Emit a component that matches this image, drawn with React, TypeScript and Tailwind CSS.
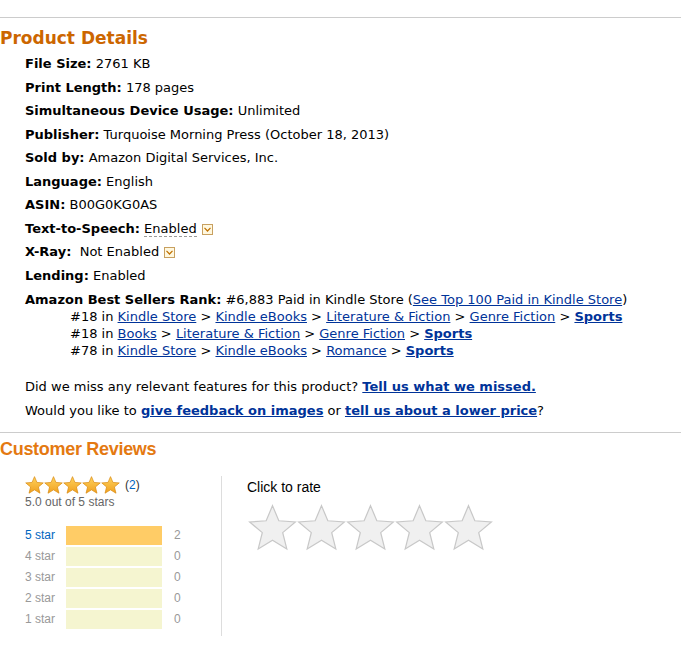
import React from 'react';

const link = 'text-[#003399] underline';

function Drop() {
  return (
    <span className="inline-flex items-center justify-center w-[11px] h-[11px] border border-[#c8a060] bg-[#fff8e0] ml-[5px] align-[1px]">
      <svg width="7" height="5" viewBox="0 0 7 5">
        <path d="M0.5 0.8 L3.5 4 L6.5 0.8" fill="none" stroke="#c07000" strokeWidth="1.2" />
      </svg>
    </span>
  );
}

function SmallStar() {
  return (
    <svg width="19" height="18" viewBox="0 0 24 23">
      <defs>
        <linearGradient id="sg" x1="0" y1="0" x2="0" y2="1">
          <stop offset="0" stopColor="#ffd35c" />
          <stop offset="1" stopColor="#f0a020" />
        </linearGradient>
      </defs>
      <path
        d="M12 0.8 L15.1 8.2 L23.2 8.8 L17 14 L19 22 L12 17.7 L5 22 L7 14 L0.8 8.8 L8.9 8.2 Z"
        fill="url(#sg)"
        stroke="#d88a10"
        strokeWidth="0.9"
      />
    </svg>
  );
}

function BigStar() {
  return (
    <svg width="49" height="47" viewBox="0 0 24 23">
      <path
        d="M12 0.8 L15.1 8.2 L23.2 8.8 L17 14 L19 22 L12 17.7 L5 22 L7 14 L0.8 8.8 L8.9 8.2 Z"
        fill="#f0f0f0"
        stroke="#c8c8c8"
        strokeWidth="0.6"
      />
    </svg>
  );
}

const rows: [string, React.ReactNode][] = [
  ['File Size:', '2761 KB'],
  ['Print Length:', '178 pages'],
  ['Simultaneous Device Usage:', 'Unlimited'],
  ['Publisher:', 'Turquoise Morning Press (October 18, 2013)'],
  ['Sold by:', 'Amazon Digital Services, Inc.'],
  ['Language:', 'English'],
  ['ASIN:', 'B00G0KG0AS'],
];

const bars = [
  { label: '5 star', pct: 100, n: 2 },
  { label: '4 star', pct: 0, n: 0 },
  { label: '3 star', pct: 0, n: 0 },
  { label: '2 star', pct: 0, n: 0 },
  { label: '1 star', pct: 0, n: 0 },
];

export default function App() {
  return (
    <div className="w-[681px] h-[647px] bg-white text-black overflow-hidden" style={{ fontFamily: '"DejaVu Sans", Verdana, sans-serif' }}>
      <div className="h-[18px] border-b border-[#cccccc]" />
      <h2 className="text-[17px] font-bold text-[#cc6600] leading-[20px] mt-[10px]">Product Details</h2>
      <ul className="pl-[25px] text-[13px] leading-[16px] mt-[8px]">
        {rows.map(([k, v]) => (
          <li key={k} className="mb-[7.5px]">
            <b>{k}</b> {v}
          </li>
        ))}
        <li className="mb-[7.5px]">
          <b>Text-to-Speech:</b> <span className="border-b border-dashed border-[#999]">Enabled</span>
          <Drop />
        </li>
        <li className="mb-[7.5px]">
          <b>X-Ray:</b>&nbsp; Not Enabled
          <Drop />
        </li>
        <li className="mb-[8px]">
          <b>Lending:</b> Enabled
        </li>
        <li>
          <b>Amazon Best Sellers Rank:</b> #6,883 Paid in Kindle Store (<a className={link}>See Top 100 Paid in Kindle Store</a>)
          <ul className="pl-[45px] leading-[17px]">
            <li>
              #18 in <a className={link}>Kindle Store</a> &gt; <a className={link}>Kindle eBooks</a> &gt;{' '}
              <a className={link}>Literature &amp; Fiction</a> &gt; <a className={link}>Genre Fiction</a> &gt;{' '}
              <a className={link + ' font-bold'}>Sports</a>
            </li>
            <li>
              #18 in <a className={link}>Books</a> &gt; <a className={link}>Literature &amp; Fiction</a> &gt;{' '}
              <a className={link}>Genre Fiction</a> &gt; <a className={link + ' font-bold'}>Sports</a>
            </li>
            <li>
              #78 in <a className={link}>Kindle Store</a> &gt; <a className={link}>Kindle eBooks</a> &gt;{' '}
              <a className={link}>Romance</a> &gt; <a className={link + ' font-bold'}>Sports</a>
            </li>
          </ul>
        </li>
      </ul>
      <div className="pl-[25px] text-[13px] leading-[16px] mt-[20px]">
        <p>
          Did we miss any relevant features for this product? <a className={link + ' font-bold'}>Tell us what we missed.</a>
        </p>
        <p className="mt-[8px]">
          Would you like to <a className={link + ' font-bold'}>give feedback on images</a> or{' '}
          <a className={link + ' font-bold'}>tell us about a lower price</a>?
        </p>
      </div>
      <div className="mt-[13px] border-t border-[#cccccc]" style={{ fontFamily: '"Liberation Sans", Arial, sans-serif' }}>
        <h2 className="text-[18px] font-bold text-[#e47911] leading-[22px] mt-[5px] tracking-[-0.3px]">Customer Reviews</h2>
        <div className="flex mt-[16px]">
          <div className="w-[222px] pl-[25px] border-r border-[#dddddd] h-[160px]">
            <div className="flex items-center">
              <div className="flex">
                {[0, 1, 2, 3, 4].map((i) => (
                  <SmallStar key={i} />
                ))}
              </div>
              <span className="text-[12px] ml-[5px] text-[#333]">
                (<a className="text-[#0066c0]">2</a>)
              </span>
            </div>
            <div className="text-[12px] text-[#666] leading-[14px] mt-[1px]">5.0 out of 5 stars</div>
            <div className="mt-[17px] flex flex-col gap-[2px]">
              {bars.map((b) => (
                <div key={b.label} className="flex items-center text-[12px] h-[19px]">
                  <span className={'w-[41px] ' + (b.n ? 'text-[#0066c0]' : 'text-[#999]')}>{b.label}</span>
                  <div className="w-[96px] h-[19px] bg-[#f5f5d0]">
                    <div className="h-full bg-[#ffcc66]" style={{ width: b.pct + '%' }} />
                  </div>
                  <span className="ml-[12px] text-[#999]">{b.n}</span>
                </div>
              ))}
            </div>
          </div>
          <div className="pl-[25px] pt-[3px]">
            <div className="text-[14px] leading-[16px]">Click to rate</div>
            <div className="flex mt-[9px] ml-[1px]">
              {[0, 1, 2, 3, 4].map((i) => (
                <BigStar key={i} />
              ))}
            </div>
          </div>
        </div>
      </div>
    </div>
  );
}
